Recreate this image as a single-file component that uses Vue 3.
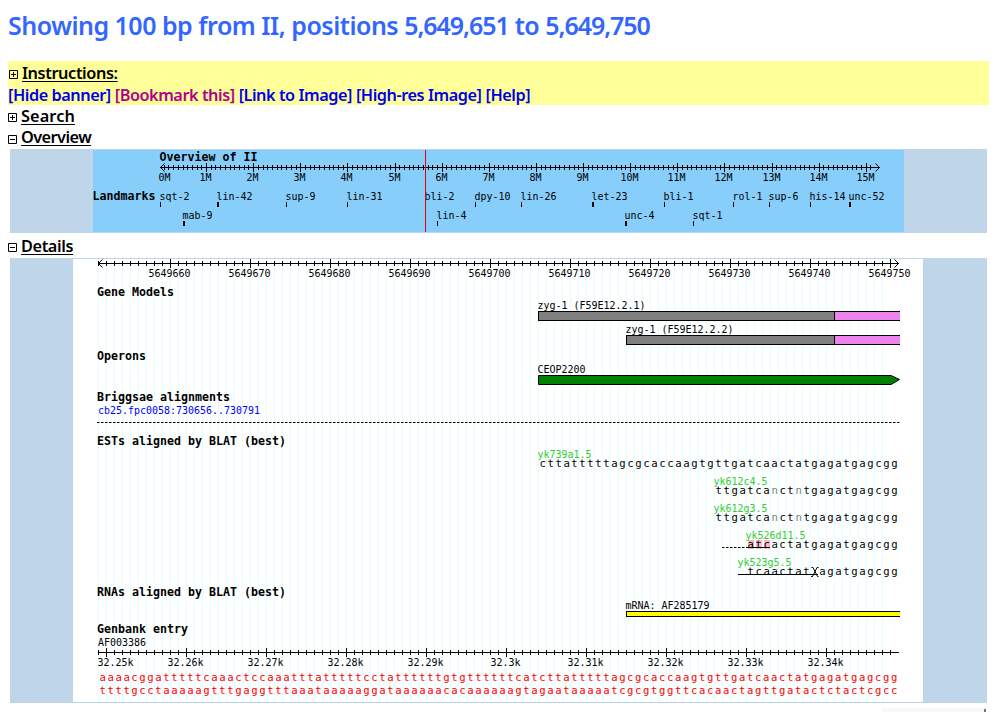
<script setup>
const range = (n) => Array.from({ length: n }, (_, i) => i)

const links = [
  { text: '[Hide banner]', cls: 'link' },
  { text: '[Bookmark this]', cls: 'link visited' },
  { text: '[Link to Image]', cls: 'link' },
  { text: '[High-res Image]', cls: 'link' },
  { text: '[Help]', cls: 'link' },
]

// Overview scale: one major tick per megabase, nine minor ticks between
const megaX = (i) => Math.floor(159.45 + i * 47.12)
const overviewMinor = range(152).slice(1).map((i) => Math.floor(159.45 + i * 4.712))
const overviewMajor = range(16).map((i) => ({
  x: megaX(i),
  label: i + 'M',
  tx: i === 0 ? 158.5 : megaX(i) - (String(i).length + 1) * 3 - 0.5,
}))

const landmarks = [
  ['sqt-2', 160, 0, 1], ['mab-9', 183, 1, 2], ['lin-42', 217, 0, 2], ['sup-9', 286, 0, 1],
  ['lin-31', 347, 0, 1], ['bli-2', 425, 0, 1], ['lin-4', 437, 1, 1], ['dpy-10', 475, 0, 1],
  ['lin-26', 521, 0, 1], ['let-23', 592, 0, 2], ['unc-4', 625, 1, 2], ['bli-1', 664, 0, 1],
  ['sqt-1', 693, 1, 1], ['rol-1', 733, 0, 1], ['sup-6', 769, 0, 1], ['his-14', 810, 0, 1],
  ['unc-52', 849, 0, 2],
].map(([name, x, row, w]) => ({ name, x, y: 200 + row * 19, w }))

const grid = range(99).map((i) => 98 + i * 8)
const positions = range(10).map((i) => ({ x: 170 + i * 80, label: String(5649660 + i * 10) }))
const genbank = ['32.25k', '32.26k', '32.27k', '32.28k', '32.29k', '32.3k', '32.31k', '32.32k', '32.33k', '32.34k']
  .map((label, i) => ({ label, x: 106 + i * 80, tx: i === 0 ? 98 : 106 + i * 80 - label.length * 3 }))

const tracks = [
  ['Gene Models', 296], ['Operons', 360], ['Briggsae alignments', 401],
  ['ESTs aligned by BLAT (best)', 445], ['RNAs aligned by BLAT (best)', 596], ['Genbank entry', 633],
]

const ests = [
  { name: 'yk739a1.5', x: 538, y: 458, start: 55, seq: 'cttatttttagcgcaccaagtgttgatcaactatgagatgagcgg' },
  { name: 'yk612c4.5', x: 714, y: 485, start: 77, seq: 'ttgatcanctntgagatgagcgg' },
  { name: 'yk612g3.5', x: 714, y: 512, start: 77, seq: 'ttgatcanctntgagatgagcgg' },
  { name: 'yk526d11.5', x: 746, y: 539, start: 81, seq: 'atcactatgagatgagcgg' },
  { name: 'yk523g5.5', x: 738, y: 566, start: 81, seq: 'tcaactat agatgagcgg' },
]
const parts = (s) => s.split(/(n)/)

const forward = 'aaaacggatttttcaaactccaaatttatttttcctattttttgtgttttttcatcttatttttagcgcaccaagtgttgatcaactatgagatgagcgg'
const pair = { a: 't', t: 'a', c: 'g', g: 'c' }
const reverse = [...forward].map((b) => pair[b]).join('')
</script>

<template>
  <main class="page">
    <h1 class="title">Showing 100 bp from II, positions <span class="num">5,649,651</span> to <span class="num">5,649,750</span></h1>

    <section class="banner">
      <div class="toggle instructions">
        <svg class="box" width="9" height="9"><path d="M.5.5h8v8h-8zM2 4.5h5M4.5 2v5" /></svg>
        <span class="label">Instructions:</span>
      </div>
      <nav class="links">
        <a v-for="l in links" :key="l.text" :class="l.cls">{{ l.text }}</a>
      </nav>
    </section>

    <div class="toggle search">
      <svg class="box" width="9" height="9"><path d="M.5.5h8v8h-8zM2 4.5h5M4.5 2v5" /></svg>
      <span class="label">Search</span>
    </div>
    <div class="toggle overview">
      <svg class="box" width="9" height="9"><path d="M.5.5h8v8h-8zM2 4.5h5" /></svg>
      <span class="label">Overview</span>
    </div>

    <section class="panel">
      <svg class="map" width="811" height="82" viewBox="93 150 811 82">
        <rect x="93" y="150" width="811" height="82" fill="#87cefa" />
        <text class="bold" x="159.500" y="161">Overview of II</text>
        <path class="ink" d="M160 167.5H880M164.500 163.500l-4 4 4 4M875.500 163.500l4 4-4 4" />
        <rect v-for="x in overviewMinor" :key="'m' + x" :x="x" y="165" width="1" height="5" />
        <g v-for="t in overviewMajor" :key="t.label">
          <rect v-if="t.label !== '0M'" :x="t.x" y="163" width="1" height="9" />
          <text class="small" :x="t.tx" y="181">{{ t.label }}</text>
        </g>
        <text class="bold" x="92.500" y="200">Landmarks</text>
        <g v-for="m in landmarks" :key="m.name">
          <text class="small" :x="m.x - 0.5" :y="m.y">{{ m.name }}</text>
          <rect :x="m.x" :y="m.y + 2" :width="m.w" height="5" />
        </g>
        <rect x="425" y="150" width="1" height="82" fill="#e80010" />
      </svg>
    </section>

    <div class="toggle details">
      <svg class="box" width="9" height="9"><path d="M.5.5h8v8h-8zM2 4.5h5" /></svg>
      <span class="label">Details</span>
    </div>

    <section class="panel tracks">
      <svg class="map" width="850" height="443" viewBox="73 259 850 443">
        <rect x="73" y="259" width="850" height="443" fill="#fff" />
        <rect v-for="x in grid" :key="x" :x="x" y="259" width="1" height="443" fill="#e0ffff" />

        <path class="ink" d="M98 263.500H899M102.500 259.500l-4 4 4 4M894.500 259.500l4 4-4 4" />
        <rect v-for="x in grid" :key="'t' + x" :x="x" y="261" width="1" height="5" />
        <g v-for="p in positions" :key="p.label">
          <rect :x="p.x" y="259" width="1" height="9" />
          <text class="small" :x="p.x - 21.500" y="277">{{ p.label }}</text>
        </g>

        <text v-for="t in tracks" :key="t[0]" class="bold" x="97" :y="t[1]">{{ t[0] }}</text>

        <!-- gene models -->
        <text class="small" x="537.500" y="309">zyg-1 (F59E12.2.1)</text>
        <rect x="538" y="311" width="362" height="10" />
        <rect x="539" y="312" width="295" height="8" fill="#808080" />
        <rect x="835" y="312" width="65" height="8" fill="#ee82ee" />
        <text class="small" x="625.500" y="333">zyg-1 (F59E12.2.2)</text>
        <rect x="626" y="335" width="274" height="10" />
        <rect x="627" y="336" width="207" height="8" fill="#808080" />
        <rect x="835" y="336" width="65" height="8" fill="#ee82ee" />

        <!-- operon -->
        <text class="small" x="537.500" y="373">CEOP2200</text>
        <path d="M538.500 375.500H891L899.500 379.500 891 384.500H538.500z" fill="#008000" stroke="#000" />

        <text class="small blue" x="98" y="414">cb25.fpc0058:730656..730791</text>
        <path class="ink" stroke-dasharray="2.500 1.500" d="M97 422.500H900" />

        <!-- EST alignments -->
        <rect v-for="i in 3" :key="'p' + i" :x="740 + i * 8" y="540" width="6" height="9" fill="#ffb6c1" />
        <g v-for="e in ests" :key="e.name">
          <text class="seq" :x="99.4 + e.start * 8" :y="e.y + 9"><tspan
            v-for="(p, i) in parts(e.seq)" :key="i" :class="{ dim: p === 'n' }">{{ p }}</tspan></text>
          <text class="small green" :x="e.x - 0.5" :y="e.y">{{ e.name }}</text>
        </g>
        <path class="ink" stroke-dasharray="2.500 1.500" d="M722 547.500H746" />
        <path class="ink" d="M746 547.500H770M738 574.500H818" />
        <path class="ink" d="M811.500 567.500h1.500l4.500 9h1M818.500 567.500h-1.500l-4.500 9h-1.500" />

        <!-- mRNA -->
        <text class="small" x="625.500" y="609">mRNA: AF285179</text>
        <rect x="626" y="611" width="274" height="6" />
        <rect x="627" y="612" width="273" height="4" fill="#ff0" />

        <!-- GenBank scale -->
        <text class="small" x="98" y="646">AF003386</text>
        <path class="ink" d="M98 652.500H899" />
        <rect v-for="x in grid" :key="'g' + x" :x="x" y="650" width="1" height="5" />
        <rect x="890" y="650" width="1" height="5" />
        <g v-for="g in genbank" :key="g.label">
          <rect :x="g.x" y="648" width="1" height="9" />
          <text class="small" :x="g.tx - 0.5" y="666">{{ g.label }}</text>
        </g>
        <text class="seq red" x="99.400" y="681">{{ forward }}</text>
        <text class="seq red" x="99.400" y="694">{{ reverse }}</text>
      </svg>
    </section>

    <footer class="status"><span class="notch"></span></footer>
  </main>
</template>

<style>
html, body { margin: 0; background: #fff; overflow: hidden; }
</style>

<style scoped>
.page {
  box-sizing: border-box;
  width: 995px;
  height: 712px;
  padding: 0 6px 0 8px;
  overflow: hidden;
  font-family: "Noto Sans", "Open Sans", sans-serif;
  font-weight: 600;
  display: flex;
  flex-direction: column;
}
.title {
  margin: 0;
  height: 61px;
  flex: none;
  font-size: 25px;
  font-weight: 600;
  letter-spacing: -0.5px;
  line-height: 51px;
  color: #36f;
  white-space: nowrap;
}
.num { letter-spacing: -1.06px; }
.banner {
  flex: none;
  width: 981px;
  height: 44px;
  background: #ff9;
}
.links {
  display: flex;
  gap: 4px;
  height: 21px;
  line-height: 22px;
  font-size: 16.3px;
  letter-spacing: -0.46px;
  white-space: nowrap;
}
.link { color: #00e; }
.visited { color: #b0008c; }
.toggle {
  flex: none;
  display: flex;
  align-items: center;
  gap: 4px;
  height: 21px;
  font-size: 16.3px;
  letter-spacing: -0.4px;
  line-height: 21px;
}
.instructions { height: 23px; padding-left: 1px; }
.instructions .label { padding-top: 2px; }
.search { height: 22px; letter-spacing: 0.1px; }
.overview { height: 22px; letter-spacing: -0.55px; }
.overview .label { padding-bottom: 2px; }
.details { height: 25px; }
.details .label { padding-top: 2px; }
.box { flex: none; margin-top: 3px; fill: none; stroke: #000; }
.label { text-decoration: underline; text-decoration-thickness: 1px; text-underline-offset: 2px; }
.panel {
  box-sizing: border-box;
  flex: none;
  display: flex;
  width: 977px;
  margin-left: 2px;
  padding: 1px 0 1px 83px;
  background: #bfd5ea;
}
.tracks { padding-left: 63px; }
.map { display: block; }
.map text { font-family: "DejaVu Sans Mono", "Liberation Mono", monospace; font-weight: 400; white-space: pre; }
.map .small { font-size: 9.97px; }
.map .bold { font-size: 11.63px; font-weight: 700; }
.map .seq { font-size: 10.6px; letter-spacing: 1.618px; }
.ink { fill: none; stroke: #000; }
.blue { fill: #00f; }
.green { fill: #32cd32; }
.red { fill: #f00; }
.dim { fill: #808080; }
.status {
  flex: none;
  display: flex;
  justify-content: flex-end;
  align-items: flex-end;
  width: 104px;
  height: 4px;
  margin: 5px 0 0 874px;
  background: #f8f8f8;
}
.notch { width: 2px; height: 3px; background: #777; }
</style>
